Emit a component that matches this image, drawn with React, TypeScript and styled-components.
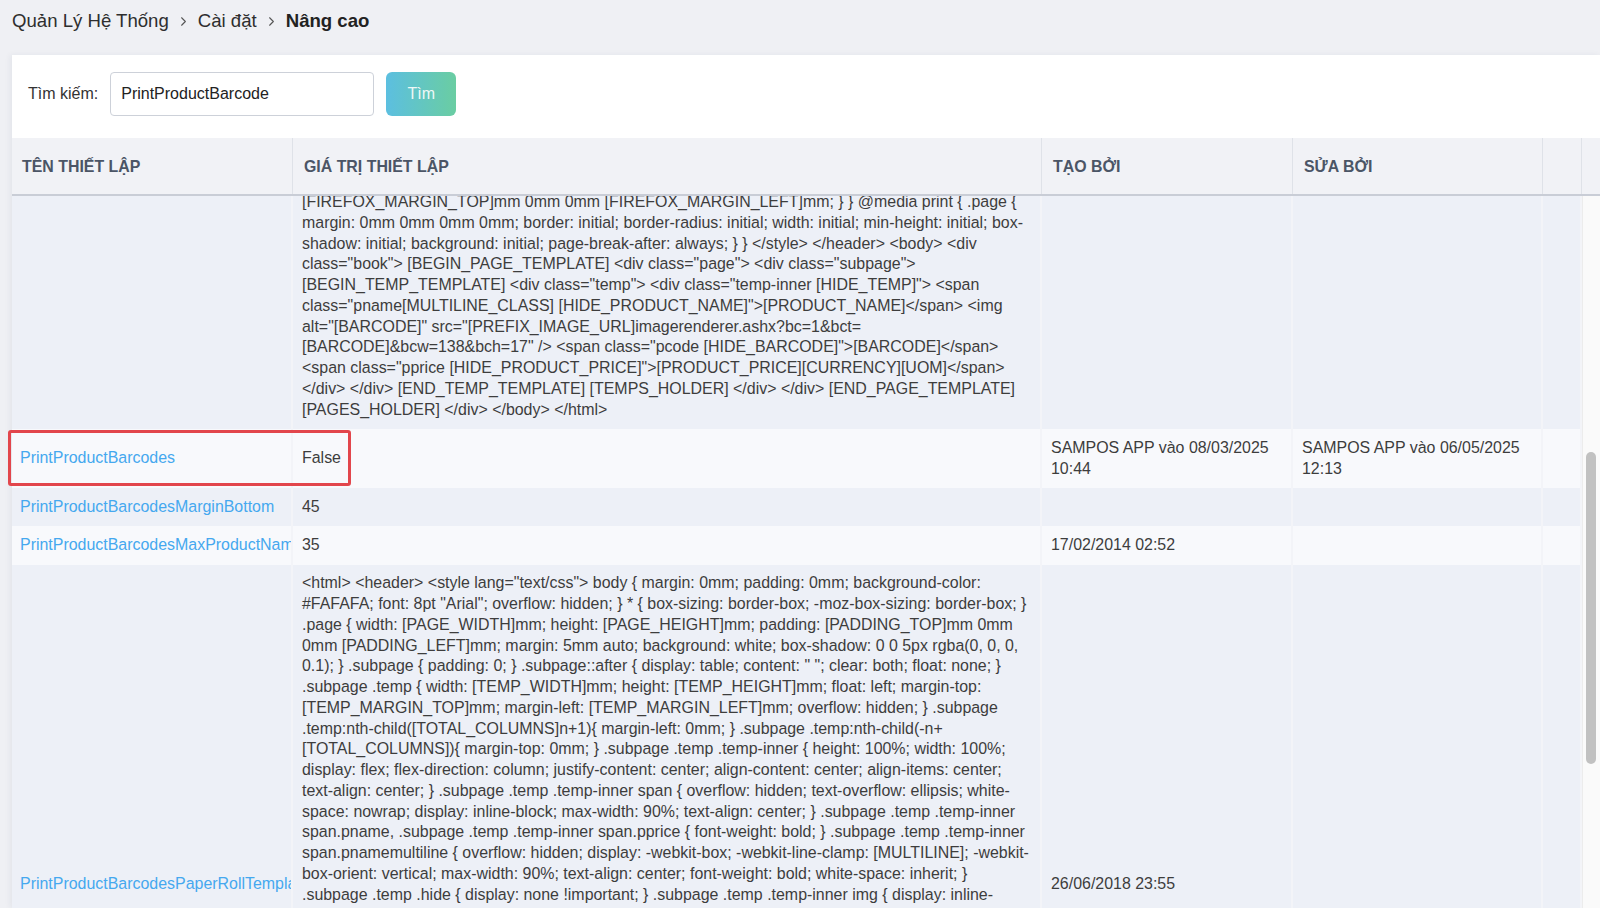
import styled, { createGlobalStyle } from 'styled-components';
import { ChevronRight } from 'lucide-react';

const GlobalStyle = createGlobalStyle`
  html, body {
    margin: 0;
    padding: 0;
    height: 100%;
    overflow: hidden;
    background: #eff0f4;
    font-family: "Liberation Sans", Arial, Helvetica, sans-serif;
    color: #3d3d3d;
  }
`;

const Page = styled.div`
  height: 908px;
  display: flex;
  flex-direction: column;
`;

const Breadcrumb = styled.div`
  height: 55px;
  flex: 0 0 55px;
  display: flex;
  align-items: center;
  gap: 7px;
  padding: 0 0 13px 12px;
  box-sizing: border-box;
  font-size: 18.6px;
  color: #2b2b2b;
`;

const Crumb = styled.span<{ $current?: boolean }>`
  font-weight: ${(p) => (p.$current ? 700 : 400)};
  color: ${(p) => (p.$current ? '#222' : '#2e2e2e')};
`;

const Card = styled.div`
  flex: 1;
  margin-left: 12px;
  background: #fff;
  box-shadow: -2px 0 6px rgba(40, 50, 80, 0.06);
  display: flex;
  flex-direction: column;
  min-height: 0;
`;

const SearchBar = styled.div`
  height: 83px;
  flex: 0 0 83px;
  box-sizing: border-box;
  padding: 17px 0 0 16px;
  display: flex;
  align-items: flex-start;
`;

const SearchLabel = styled.label`
  font-size: 16px;
  color: #333;
  line-height: 43px;
  margin-right: 12px;
`;

const SearchInput = styled.input`
  width: 264px;
  height: 44px;
  box-sizing: border-box;
  border: 1px solid #cdd1d9;
  border-radius: 4px;
  padding: 0 10px;
  font-family: inherit;
  font-size: 16px;
  color: #222;
  outline: none;
  margin-right: 12px;
`;

const SearchButton = styled.button`
  width: 70px;
  height: 44px;
  border: none;
  border-radius: 6px;
  background: linear-gradient(90deg, #5cbfe0 0%, #6acda2 100%);
  color: #eef8f6;
  font-family: inherit;
  font-size: 16px;
  cursor: pointer;
`;

const COLUMNS = '281px 749px 251px 250px 39px';

const HeaderRow = styled.div`
  display: grid;
  grid-template-columns: ${COLUMNS} 18px;
  height: 58px;
  flex: 0 0 58px;
  box-sizing: border-box;
  background: #f1f2f6;
  border-bottom: 2px solid #c9cdd6;
`;

const HeaderCell = styled.div<{ $first?: boolean }>`
  display: flex;
  align-items: center;
  padding: 2px 0 0 ${(p) => (p.$first ? '10px' : '11px')};
  border-right: 1px solid #dfe2e8;
  font-size: 15.9px;
  font-weight: 700;
  color: #4b5566;
  white-space: nowrap;
`;

const HeaderGutter = styled.div`
  background: #f1f2f6;
`;

const Body = styled.div`
  flex: 1;
  min-height: 0;
  display: flex;
  overflow-x: visible;
  overflow-y: clip;
`;

const Rows = styled.div`
  width: 1570px;
  flex: 0 0 1570px;
  display: flex;
  flex-direction: column;
`;

const Row = styled.div<{ $tone: 'dark' | 'light'; $cut?: boolean }>`
  position: relative;
  display: grid;
  grid-template-columns: ${COLUMNS};
  flex: 0 0 auto;
  background: ${(p) => (p.$tone === 'dark' ? '#edf0f7' : '#f8f9fc')};
  margin-top: ${(p) => (p.$cut ? '-4px' : '0')};
`;

const Cell = styled.div<{ $cut?: boolean }>`
  display: flex;
  align-items: center;
  min-width: 0;
  overflow: hidden;
  padding: ${(p) => (p.$cut ? '0 8px 8.75px 9px' : '8.75px 8px 8.75px 9px')};
  border-right: 2px solid #f3f4f8;
  font-size: 15.95px;
  line-height: 20.75px;
  color: #3d3d3d;
  overflow-wrap: break-word;
`;

const NameCell = styled(Cell)`
  padding-left: 8px;
  padding-right: 0;
  white-space: nowrap;
`;

const NameLink = styled.a`
  color: #45a8ef;
  text-decoration: none;
  white-space: nowrap;
`;

const Highlight = styled.div`
  position: absolute;
  left: -4px;
  top: 1px;
  width: 343px;
  height: 56px;
  box-sizing: border-box;
  border: 3px solid #e2464c;
  border-radius: 3px;
  pointer-events: none;
`;

const Track = styled.div`
  flex: 0 0 18px;
  background: #fafafa;
  border-left: 1px solid #ececec;
  box-sizing: border-box;
  padding: 256px 0 0 3px;
`;

const Thumb = styled.div`
  width: 10px;
  height: 312px;
  border-radius: 5px;
  background: #c1c1c1;
`;

const tailA =
  '[FIREFOX_MARGIN_TOP]mm 0mm 0mm [FIREFOX_MARGIN_LEFT]mm; } } @media print { .page { margin: 0mm 0mm 0mm 0mm; ' +
  'border: initial; border-radius: initial; width: initial; min-height: initial; box-shadow: initial; ' +
  'background: initial; page-break-after: always; } } </style> </header> <body> <div class="book"> ' +
  '[BEGIN_PAGE_TEMPLATE] <div class="page"> <div class="subpage"> [BEGIN_TEMP_TEMPLATE] <div class="temp"> ' +
  '<div class="temp-inner [HIDE_TEMP]"> <span class="pname[MULTILINE_CLASS] [HIDE_PRODUCT_NAME]">[PRODUCT_NAME]</span> ' +
  '<img alt="[BARCODE]" src="[PREFIX_IMAGE_URL]imagerenderer.ashx?bc=1&bct=';
const tailB =
  '[BARCODE]&bcw=138&bch=17" /> <span class="pcode [HIDE_BARCODE]">[BARCODE]</span> ' +
  '<span class="pprice [HIDE_PRODUCT_PRICE]">[PRODUCT_PRICE][CURRENCY][UOM]</span> </div> </div> ' +
  '[END_TEMP_TEMPLATE] [TEMPS_HOLDER] </div> </div> [END_PAGE_TEMPLATE] [PAGES_HOLDER] </div> </body> </html>';

const rollA =
  '<html> <header> <style lang="text/css"> body { margin: 0mm; padding: 0mm; background-color: #FAFAFA; ' +
  'font: 8pt "Arial"; overflow: hidden; } * { box-sizing: border-box; -moz-box-sizing: border-box; } ' +
  '.page { width: [PAGE_WIDTH]mm; height: [PAGE_HEIGHT]mm; padding: [PADDING_TOP]mm 0mm 0mm [PADDING_LEFT]mm; ' +
  'margin: 5mm auto; background: white; box-shadow: 0 0 5px rgba(0, 0, 0, 0.1); } .subpage { padding: 0; } ' +
  '.subpage::after { display: table; content: " "; clear: both; float: none; } .subpage .temp { ' +
  'width: [TEMP_WIDTH]mm; height: [TEMP_HEIGHT]mm; float: left; margin-top: [TEMP_MARGIN_TOP]mm; ' +
  'margin-left: [TEMP_MARGIN_LEFT]mm; overflow: hidden; } .subpage .temp:nth-child([TOTAL_COLUMNS]n+1){ ' +
  'margin-left: 0mm; } .subpage .temp:nth-child(-n+';
const rollB =
  '[TOTAL_COLUMNS]){ margin-top: 0mm; } .subpage .temp .temp-inner { height: 100%; width: 100%; ' +
  'display: flex; flex-direction: column; justify-content: center; align-content: center; align-items: center; ' +
  'text-align: center; } .subpage .temp .temp-inner span { overflow: hidden; text-overflow: ellipsis; ' +
  'white-space: nowrap; display: inline-block; max-width: 90%; text-align: center; } .subpage .temp .temp-inner ' +
  'span.pname, .subpage .temp .temp-inner span.pprice { font-weight: bold; } .subpage .temp .temp-inner ' +
  'span.pnamemultiline { overflow: hidden; display: -webkit-box; -webkit-line-clamp: [MULTILINE]; -webkit-';
const rollC =
  'box-orient: vertical; max-width: 90%; text-align: center; font-weight: bold; white-space: inherit; } ' +
  '.subpage .temp .hide { display: none !important; } .subpage .temp .temp-inner img { display: inline-block; ' +
  'max-width: 100%; height: auto; } .subpage .temp .temp-inner span.pcode { font-size: 7pt; } ' +
  '.subpage .temp .temp-inner span.pprice { font-size: 8pt; } @page { size: [PAGE_WIDTH]mm [PAGE_HEIGHT]mm; ' +
  'margin: 0mm; } @media print { html, body { width: [PAGE_WIDTH]mm; height: [PAGE_HEIGHT]mm; margin: 0mm; ' +
  'padding: 0mm; background-color: white; } @-moz-document url-prefix() { .page { padding: ' +
  '[FIREFOX_MARGIN_TOP]mm 0mm 0mm [FIREFOX_MARGIN_LEFT]mm; } } .page { margin: 0mm 0mm 0mm 0mm; ' +
  'border: initial; border-radius: initial; width: initial; min-height: initial; box-shadow: initial; ' +
  'background: initial; page-break-after: always; } } </style> </header> <body> <div class="book"> ' +
  '[BEGIN_PAGE_TEMPLATE] <div class="page"> <div class="subpage"> [BEGIN_TEMP_TEMPLATE] <div class="temp"> ' +
  '<div class="temp-inner [HIDE_TEMP]"> <span class="pname[MULTILINE_CLASS] [HIDE_PRODUCT_NAME]">[PRODUCT_NAME]</span> ' +
  '<span class="pcode [HIDE_BARCODE]">[BARCODE]</span> <span class="pprice [HIDE_PRODUCT_PRICE]">' +
  '[PRODUCT_PRICE][CURRENCY][UOM]</span> </div> </div> [END_TEMP_TEMPLATE] [TEMPS_HOLDER] ' +
  '</div> </div> [END_PAGE_TEMPLATE] [PAGES_HOLDER] </div> </body> </html>';

const App = () => {
  return (
    <>
      <GlobalStyle />
      <Page>
        <Breadcrumb>
          <Crumb>Quản Lý Hệ Thống</Crumb>
          <ChevronRight size={15} strokeWidth={1.7} color="#555" />
          <Crumb>Cài đặt</Crumb>
          <ChevronRight size={15} strokeWidth={1.7} color="#555" />
          <Crumb $current>Nâng cao</Crumb>
        </Breadcrumb>

        <Card>
          <SearchBar>
            <SearchLabel>Tìm kiếm:</SearchLabel>
            <SearchInput defaultValue="PrintProductBarcode" />
            <SearchButton>Tìm</SearchButton>
          </SearchBar>

          <HeaderRow>
            <HeaderCell $first>TÊN THIẾT LẬP</HeaderCell>
            <HeaderCell>GIÁ TRỊ THIẾT LẬP</HeaderCell>
            <HeaderCell>TẠO BỞI</HeaderCell>
            <HeaderCell>SỬA BỞI</HeaderCell>
            <HeaderCell />
            <HeaderGutter />
          </HeaderRow>

          <Body>
            <Rows>
              <Row $tone="dark" $cut>
                <NameCell $cut />
                <Cell $cut>
                  <span>
                    {tailA}
                    <wbr />
                    {tailB}
                  </span>
                </Cell>
                <Cell $cut />
                <Cell $cut />
                <Cell $cut />
              </Row>

              <Row $tone="light">
                <NameCell>
                  <NameLink href="#">PrintProductBarcodes</NameLink>
                </NameCell>
                <Cell>False</Cell>
                <Cell>SAMPOS APP vào 08/03/2025 10:44</Cell>
                <Cell>SAMPOS APP vào 06/05/2025 12:13</Cell>
                <Cell />
                <Highlight />
              </Row>

              <Row $tone="dark">
                <NameCell>
                  <NameLink href="#">PrintProductBarcodesMarginBottom</NameLink>
                </NameCell>
                <Cell>45</Cell>
                <Cell />
                <Cell />
                <Cell />
              </Row>

              <Row $tone="light">
                <NameCell>
                  <NameLink href="#">PrintProductBarcodesMaxProductNameLength</NameLink>
                </NameCell>
                <Cell>35</Cell>
                <Cell>17/02/2014 02:52</Cell>
                <Cell />
                <Cell />
              </Row>

              <Row $tone="dark">
                <NameCell>
                  <NameLink href="#">PrintProductBarcodesPaperRollTemplate</NameLink>
                </NameCell>
                <Cell>
                  <span>
                    {rollA}
                    <wbr />
                    {rollB}
                    <wbr />
                    {rollC}
                  </span>
                </Cell>
                <Cell>26/06/2018 23:55</Cell>
                <Cell />
                <Cell />
              </Row>
            </Rows>
            <Track>
              <Thumb />
            </Track>
          </Body>
        </Card>
      </Page>
    </>
  );
};

export default App;
